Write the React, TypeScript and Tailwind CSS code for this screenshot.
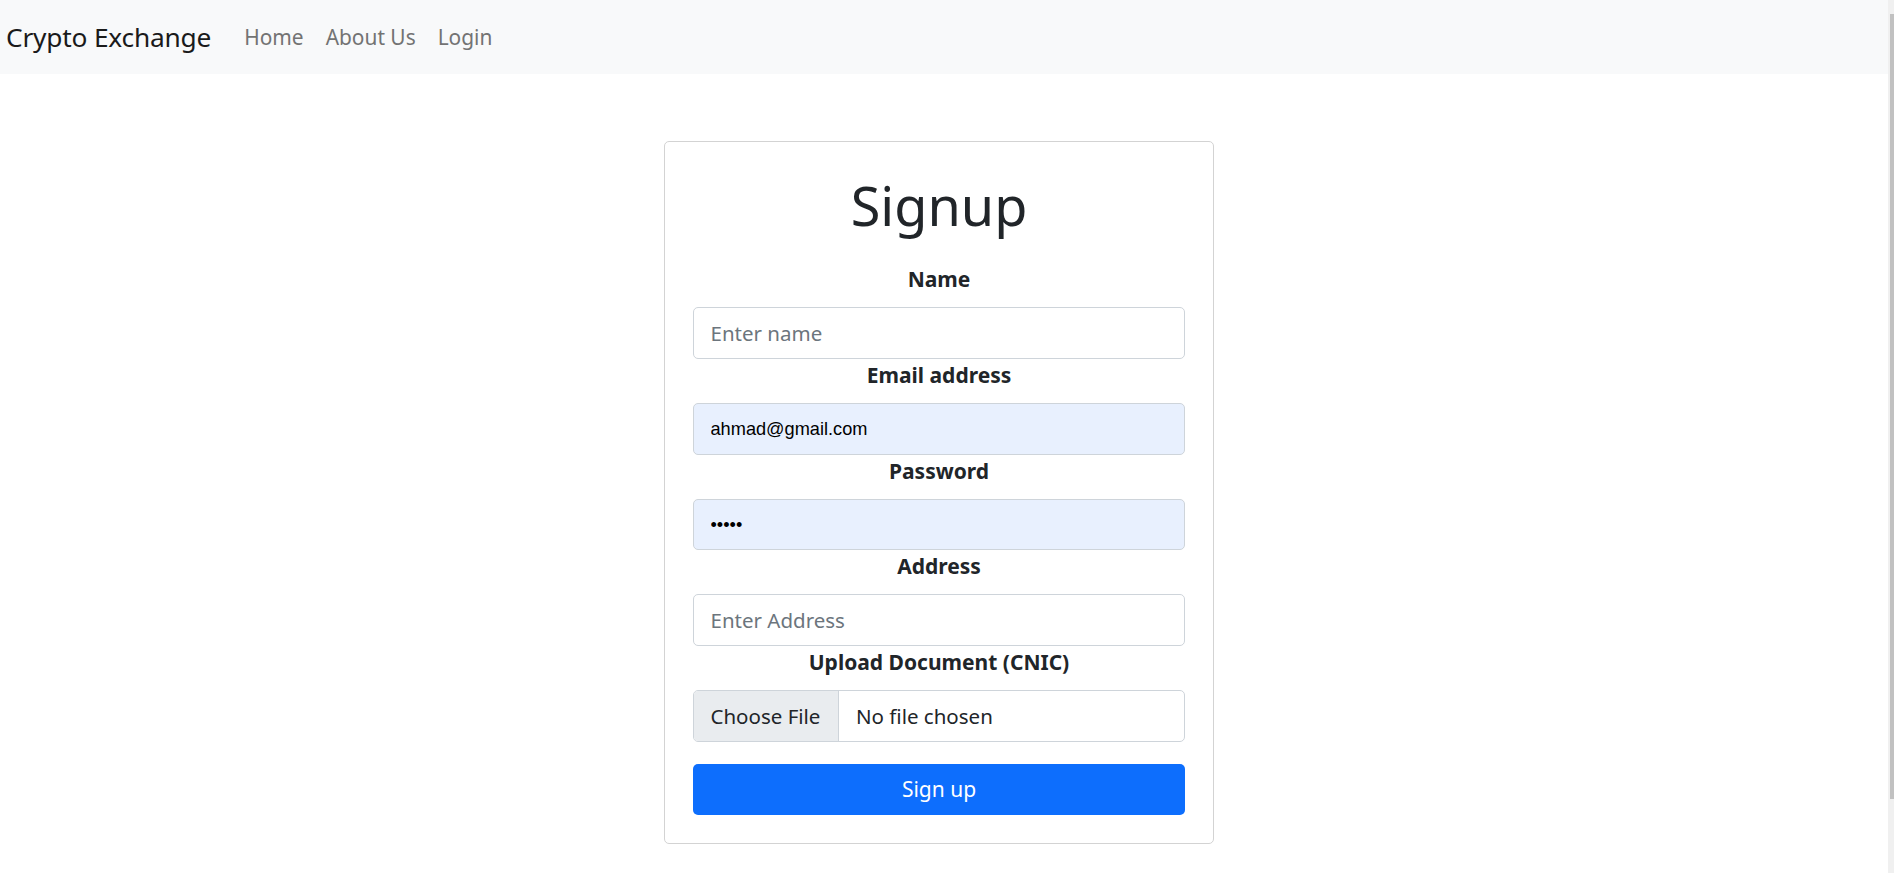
import React from "react";

const font = { fontFamily: '"Noto Sans", "Open Sans", sans-serif' };

function Label({ children }: { children: React.ReactNode }) {
  return (
    <label className="block text-center font-bold text-[21px] leading-[33px] mb-[11px] text-[#212529]">
      {children}
    </label>
  );
}

export default function App() {
  return (
    <div className="flex h-[873px] w-full overflow-hidden bg-white" style={font}>
      <div className="flex-1 flex flex-col min-w-0">
        <nav className="h-[74px] bg-[#f8f9fa] flex items-center px-[6px] pt-[1px]">
          <a className="text-[26.3px] text-[#1a1a1a] mr-[22px] tracking-[-0.2px]">Crypto Exchange</a>
          <a className="text-[20.9px] text-[#737373] px-[11px]">Home</a>
          <a className="text-[20.9px] text-[#737373] px-[11px]">About Us</a>
          <a className="text-[20.9px] text-[#737373] px-[11px]">Login</a>
        </nav>
        <div className="flex justify-center pr-[10px] pt-[67px]">
          <div className="w-[550px] border border-[#d3d3d3] rounded-[5px] p-[28px]">
            <h1 className="text-center text-[54px] leading-[66px] mt-[2px] mb-[25px] text-[#212529] font-normal">
              Signup
            </h1>
            <Label>Name</Label>
            <input
              className="block w-full h-[51.8px] border border-[#ced4da] rounded-[5px] px-[16.5px] text-[20.5px] text-[#212529] placeholder:text-[#6c757d] outline-none bg-white"
              placeholder="Enter name"
            />
            <Label>Email address</Label>
            <input
              className="block w-full h-[51.8px] border border-[#ced4da] rounded-[5px] px-[16.5px] pt-[2px] text-[18.2px] text-black outline-none bg-[#e8f0fe]"
              style={{ fontFamily: '"Liberation Sans", Arial, sans-serif' }}
              defaultValue="ahmad@gmail.com"
            />
            <Label>Password</Label>
            <input
              type="password"
              className="block w-full h-[51.8px] border border-[#ced4da] rounded-[5px] px-[16.5px] pt-[2px] text-[18.2px] text-black outline-none bg-[#e8f0fe]"
              style={{ fontFamily: '"Liberation Sans", Arial, sans-serif' }}
              defaultValue="12345"
            />
            <Label>Address</Label>
            <input
              className="block w-full h-[51.8px] border border-[#ced4da] rounded-[5px] px-[16.5px] text-[20.5px] text-[#212529] placeholder:text-[#6c757d] outline-none bg-white"
              placeholder="Enter Address"
            />
            <Label>Upload Document (CNIC)</Label>
            <div className="flex w-full h-[51.8px] border border-[#ced4da] rounded-[5px] overflow-hidden text-[20.5px] text-[#212529]">
              <div className="w-[145px] shrink-0 bg-[#e9ecef] border-r border-[#ced4da] flex items-center pl-[16.5px]">
                Choose File
              </div>
              <div className="flex items-center pl-[17px]">No file chosen</div>
            </div>
            <button className="mt-[22.5px] w-full h-[51px] rounded-[5px] bg-[#0d6efd] text-white text-[21px]">
              Sign up
            </button>
          </div>
        </div>
      </div>
      <div className="w-[6px] shrink-0 bg-[#f0f0f0] flex flex-col">
        <div className="mt-[14px] ml-[2px] w-[4px] h-[785px] bg-[#c1c1c1]" />
      </div>
    </div>
  );
}
